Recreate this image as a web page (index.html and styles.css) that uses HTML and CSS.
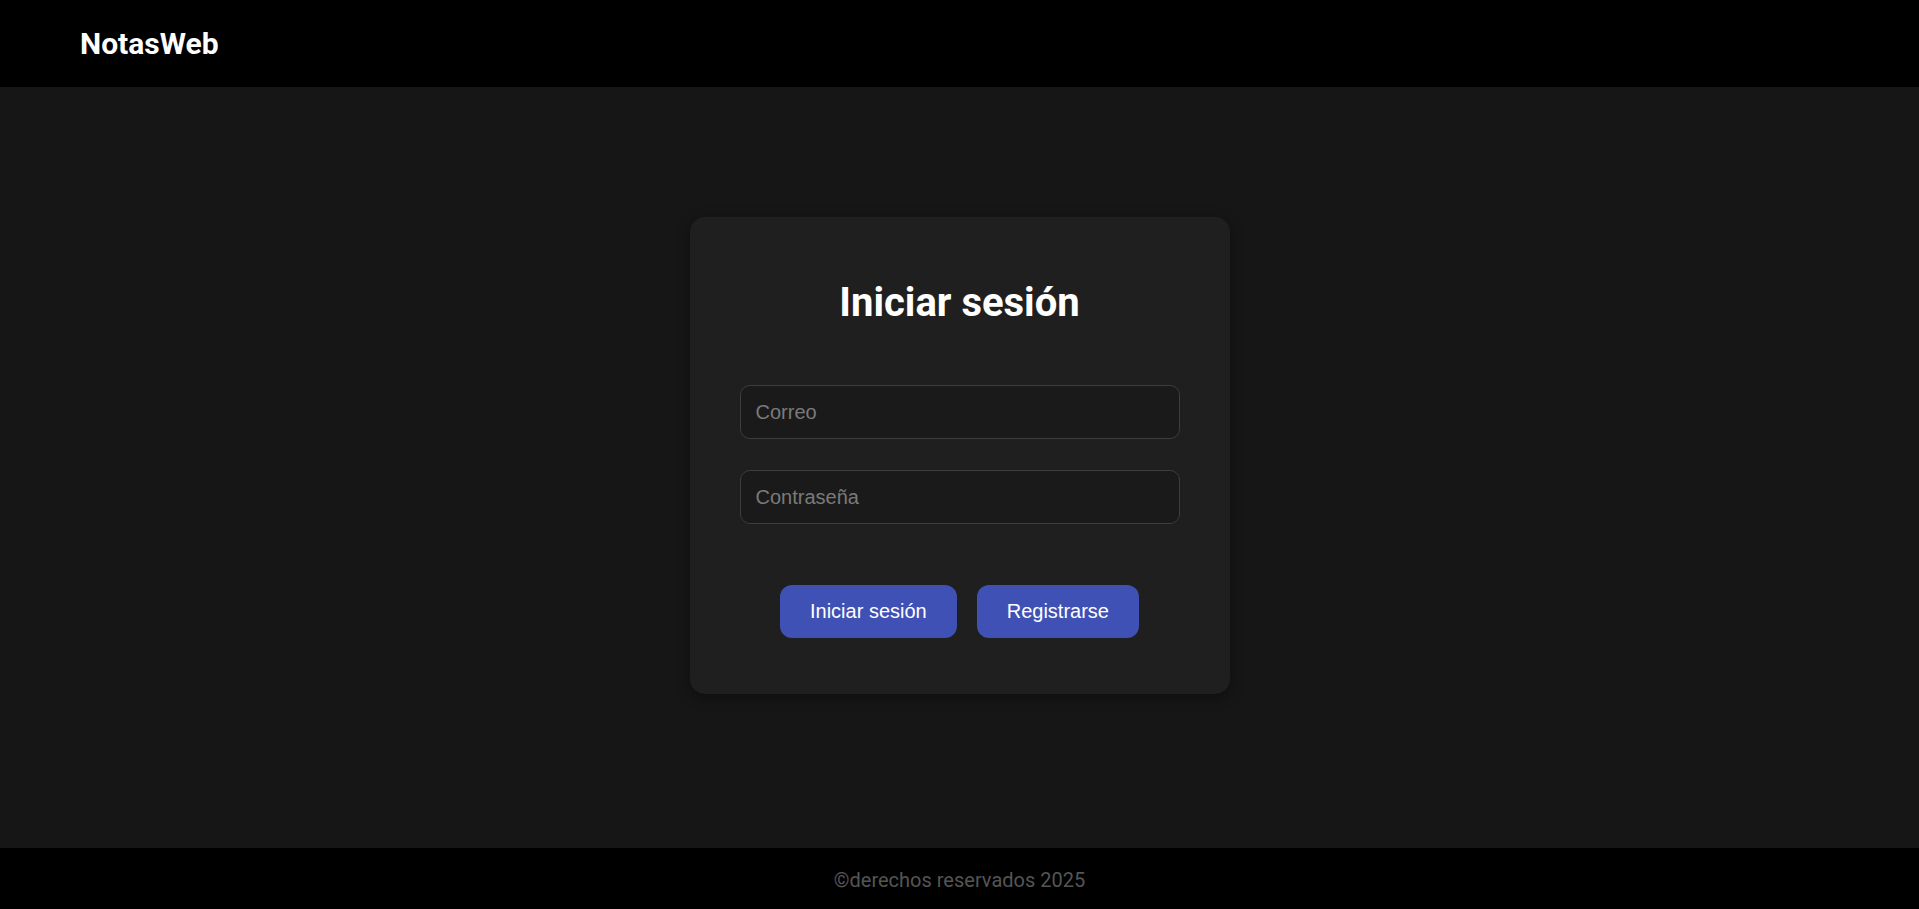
FILE: index.html
```html
<!DOCTYPE html>
<html lang="es">
<head>
<meta charset="utf-8">
<title>NotasWeb</title>
<link rel="stylesheet" href="styles.css">
</head>
<body>
<header class="topbar">
  <div class="brand">NotasWeb</div>
</header>
<main class="content">
  <form class="card" onsubmit="return false;">
    <h2 class="card-title">Iniciar sesión</h2>
    <div class="fields">
      <input class="field" type="email" placeholder="Correo">
      <input class="field" type="password" placeholder="Contraseña">
    </div>
    <div class="actions">
      <button class="btn" type="submit">Iniciar sesión</button>
      <button class="btn" type="button">Registrarse</button>
    </div>
  </form>
</main>
<footer class="footer">©derechos reservados 2025</footer>
</body>
</html>
```
FILE: styles.css
```css
* { box-sizing: border-box; }
html, body { height: 100%; }
body {
  margin: 0;
  display: flex;
  flex-direction: column;
  min-height: 100vh;
  background: #161616;
  font-family: Roboto, "Liberation Sans", Arial, sans-serif;
  color: #fff;
}
.topbar {
  height: 87px;
  flex: 0 0 87px;
  background: #000;
  display: flex;
  align-items: center;
  padding-left: 80px;
}
.brand {
  font-family: Roboto, sans-serif;
  font-weight: 700;
  font-size: 30px;
  color: #fff;
}
.content {
  flex: 1;
  display: flex;
  align-items: center;
  justify-content: center;
  padding-bottom: 24px;
}
.card {
  width: 540px;
  background: #1f1f1f;
  border-radius: 15px;
  padding: 40px 50px 56px;
  box-shadow: 0 4px 14px rgba(0, 0, 0, 0.35);
}
.card-title {
  margin: 22px 0 59px;
  text-align: center;
  font-family: Roboto, sans-serif;
  font-weight: 700;
  font-size: 40px;
  line-height: 47px;
  color: #fff;
}
.fields {
  display: flex;
  flex-direction: column;
  gap: 31px;
}
.field {
  display: block;
  width: 100%;
  height: 54px;
  padding: 0 15px;
  background: #1a1a1a;
  border: 1px solid #3d3d3d;
  border-radius: 10px;
  font-family: "Liberation Sans", Arial, sans-serif;
  font-size: 20px;
  color: #ddd;
  outline: none;
}
.field::placeholder { color: #7a7a7a; }
.actions {
  display: flex;
  justify-content: center;
  gap: 20px;
  margin-top: 61px;
}
.btn {
  background: #3f51b5;
  color: #fff;
  border: none;
  border-radius: 12px;
  padding: 15px 30px;
  font-family: "Liberation Sans", Arial, sans-serif;
  font-size: 20px;
  line-height: 23px;
  cursor: pointer;
}
.footer {
  flex: 0 0 61px;
  height: 61px;
  background: #000;
  display: flex;
  align-items: center;
  justify-content: center;
  padding-top: 2px;
  font-family: Roboto, sans-serif;
  font-size: 20px;
  color: #555;
}
```
